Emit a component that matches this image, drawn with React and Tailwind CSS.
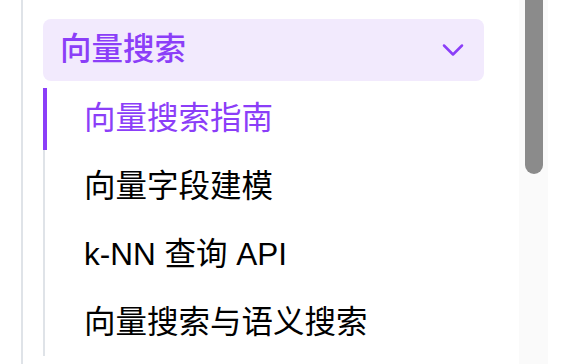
import { ChevronDown } from 'lucide-react'

const ITEMS = [
  { label: '向量搜索指南', active: true },
  { label: '向量字段建模' },
  { label: 'k-NN 查询 API' },
  { label: '向量搜索与语义搜索' },
]

export default function App() {
  return (
    <div
      className="w-[578px] h-[364px] flex bg-white overflow-hidden"
      style={{ fontFamily: '"Liberation Sans", "Noto Sans CJK SC", sans-serif' }}
    >
      {/* Sidebar tree */}
      <div className="flex-1 min-w-0 pl-[21px]">
        <div className="h-full border-l-2 border-[#dfe3e8] pl-[20px] pr-[35px] pt-[19px]">
          <button className="w-full h-[62px] rounded-lg bg-[#f2eafd] flex items-center justify-between pl-[17px] pr-[13px] text-[#8b3ef8] text-[31.5px] font-medium leading-none">
            <span>向量搜索</span>
            <ChevronDown size={36} strokeWidth={1.7} />
          </button>

          <ul className="mt-[7px] border-l-2 border-[#dfe3e8] flex flex-col gap-[6px] pb-[2px]">
            {ITEMS.map(item => (
              <li
                key={item.label}
                className={`h-[62px] flex items-center text-[31.5px] leading-none whitespace-nowrap
                  ${item.active
                    ? '-ml-[2px] border-l-4 border-[#8b3ef8] pl-[37px] text-[#8b3ef8]'
                    : 'pl-[39px] text-black'}`}
              >
                {item.label}
              </li>
            ))}
          </ul>
        </div>
      </div>

      {/* Scrollbar */}
      <div className="w-[29px] h-full bg-[#fafafa] shrink-0">
        <div className="ml-[6px] w-[18px] h-[174px] rounded-b-[9px] bg-[#8b8b8b]" />
      </div>
      <div className="w-[30px] shrink-0" />
    </div>
  )
}
